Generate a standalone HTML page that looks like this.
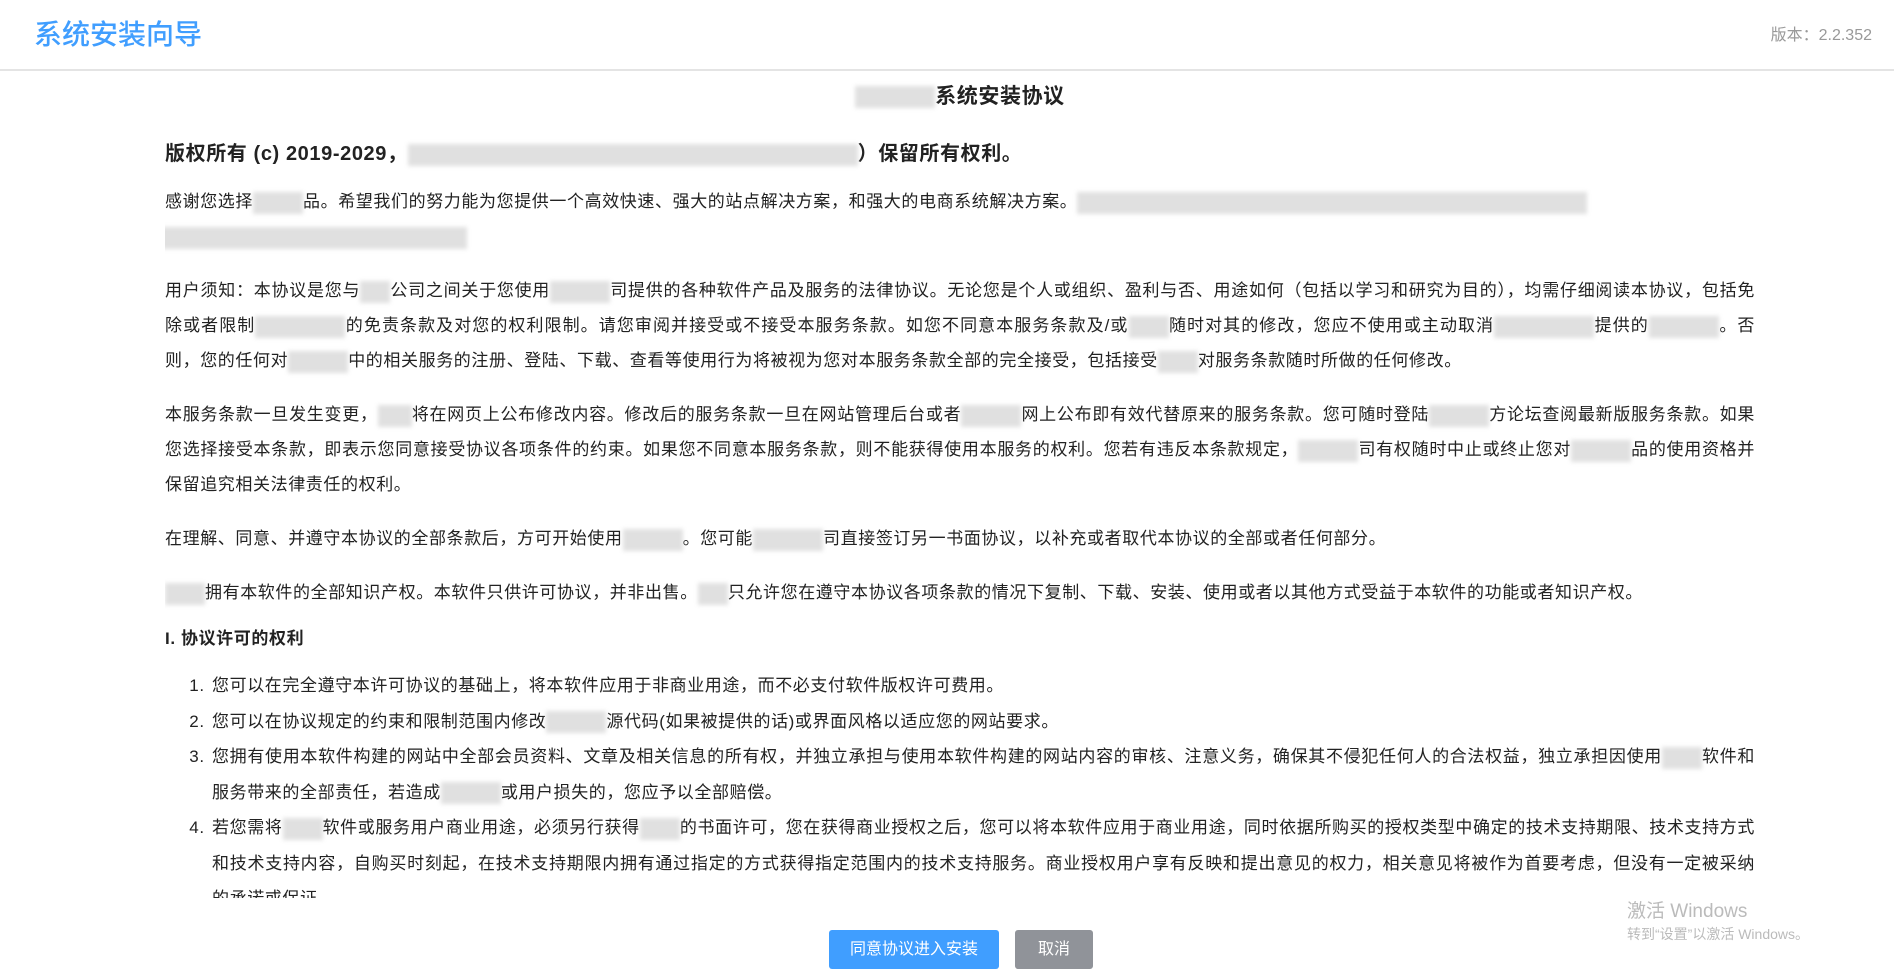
<!DOCTYPE html>
<html><head><meta charset="utf-8"><style>
*{margin:0;padding:0;box-sizing:border-box}
body{width:1894px;height:980px;overflow:hidden;background:#fff;font-family:"Liberation Sans","Noto Sans CJK SC",sans-serif;color:#222;position:relative}
.hdr{position:absolute;left:0;top:0;width:1894px;height:71px;border-bottom:2px solid #e4e4e4}
.hdr h1{position:absolute;left:34px;top:13px;font-size:28px;color:#409eff;font-weight:500}
.ver{position:absolute;right:22px;top:21px;font-size:16px;color:#999}
.content{position:absolute;left:165px;top:72px;width:1590px;height:826px;overflow:hidden;font-size:17px;line-height:35px;letter-spacing:0.6px}
.t{text-align:center;font-size:21px;font-weight:bold;margin-top:7px;line-height:36px}
.cp{font-size:20px;font-weight:bold;margin-top:21px;line-height:36px}
p{margin-top:19px;text-align:justify}
.b{display:inline-block;height:22px;vertical-align:middle;background:#ccc;filter:blur(2px);opacity:.6}
h3{font-size:17px;font-weight:bold;margin-top:11px}
ol{margin-left:45px;margin-top:12px}
li{text-align:justify;padding-left:2px;line-height:35.5px}
.btn{position:absolute;top:930px;height:39px;color:#fff;font-size:16px;line-height:39px;text-align:center;border-radius:3px}
.wm{position:absolute;left:1627px;color:#bbb}
</style></head><body>
<div class="hdr"><h1>系统安装向导</h1><div class="ver">版本：2.2.352</div></div>
<div class="content">
<div class="t"><span class="b" style="width:80px"></span>系统安装协议</div>
<div class="cp">版权所有 (c) 2019-2029，<span class="b" style="width:450px"></span>）保留所有权利。</div>
<p style="margin-top:12px">感谢您选择<span class="b" style="width:50px"></span>品。希望我们的努力能为您提供一个高效快速、强大的站点解决方案，和强大的电商系统解决方案。<span class="b" style="width:510px"></span><br><span class="b" style="width:310px;margin-left:-8px"></span></p>
<p>用户须知：本协议是您与<span class="b" style="width:30px"></span>公司之间关于您使用<span class="b" style="width:60px"></span>司提供的各种软件产品及服务的法律协议。无论您是个人或组织、盈利与否、用途如何（包括以学习和研究为目的），均需仔细阅读本协议，包括免除或者限制<span class="b" style="width:90px"></span>的免责条款及对您的权利限制。请您审阅并接受或不接受本服务条款。如您不同意本服务条款及/或<span class="b" style="width:40px"></span>随时对其的修改，您应不使用或主动取消<span class="b" style="width:100px"></span>提供的<span class="b" style="width:70px"></span>。否则，您的任何对<span class="b" style="width:60px"></span>中的相关服务的注册、登陆、下载、查看等使用行为将被视为您对本服务条款全部的完全接受，包括接受<span class="b" style="width:40px"></span>对服务条款随时所做的任何修改。</p>
<p>本服务条款一旦发生变更，<span class="b" style="width:34px"></span>将在网页上公布修改内容。修改后的服务条款一旦在网站管理后台或者<span class="b" style="width:60px"></span>网上公布即有效代替原来的服务条款。您可随时登陆<span class="b" style="width:60px"></span>方论坛查阅最新版服务条款。如果您选择接受本条款，即表示您同意接受协议各项条件的约束。如果您不同意本服务条款，则不能获得使用本服务的权利。您若有违反本条款规定，<span class="b" style="width:60px"></span>司有权随时中止或终止您对<span class="b" style="width:60px"></span>品的使用资格并保留追究相关法律责任的权利。</p>
<p>在理解、同意、并遵守本协议的全部条款后，方可开始使用<span class="b" style="width:60px"></span>。您可能<span class="b" style="width:70px"></span>司直接签订另一书面协议，以补充或者取代本协议的全部或者任何部分。</p>
<p><span class="b" style="width:40px"></span>拥有本软件的全部知识产权。本软件只供许可协议，并非出售。<span class="b" style="width:30px"></span>只允许您在遵守本协议各项条款的情况下复制、下载、安装、使用或者以其他方式受益于本软件的功能或者知识产权。</p>
<h3>I. 协议许可的权利</h3>
<ol>
<li>您可以在完全遵守本许可协议的基础上，将本软件应用于非商业用途，而不必支付软件版权许可费用。</li>
<li>您可以在协议规定的约束和限制范围内修改<span class="b" style="width:60px"></span>源代码(如果被提供的话)或界面风格以适应您的网站要求。</li>
<li>您拥有使用本软件构建的网站中全部会员资料、文章及相关信息的所有权，并独立承担与使用本软件构建的网站内容的审核、注意义务，确保其不侵犯任何人的合法权益，独立承担因使用<span class="b" style="width:40px"></span>软件和服务带来的全部责任，若造成<span class="b" style="width:60px"></span>或用户损失的，您应予以全部赔偿。</li>
<li>若您需将<span class="b" style="width:40px"></span>软件或服务用户商业用途，必须另行获得<span class="b" style="width:40px"></span>的书面许可，您在获得商业授权之后，您可以将本软件应用于商业用途，同时依据所购买的授权类型中确定的技术支持期限、技术支持方式和技术支持内容，自购买时刻起，在技术支持期限内拥有通过指定的方式获得指定范围内的技术支持服务。商业授权用户享有反映和提出意见的权力，相关意见将被作为首要考虑，但没有一定被采纳的承诺或保证。</li>
</ol>
</div>
<div class="btn" style="left:829px;width:170px;background:#409eff">同意协议进入安装</div>
<div class="btn" style="left:1015px;width:78px;background:#909399">取消</div>
<div class="wm" style="top:896px;font-size:19px">激活 Windows</div>
<div class="wm" style="top:924px;font-size:14px">转到“设置”以激活 Windows。</div>
</body></html>
